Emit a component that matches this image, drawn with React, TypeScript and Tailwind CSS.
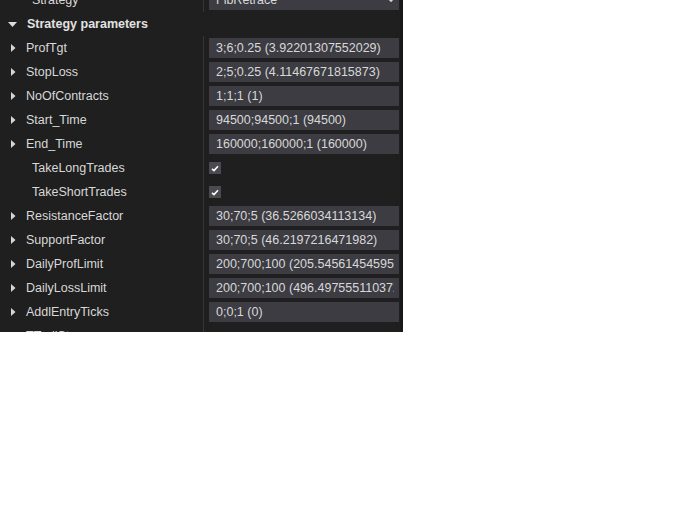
import { ChevronDown } from 'lucide-react';

type Row = { name: string; value?: string; check?: boolean };

const rows: Row[] = [
  { name: 'ProfTgt', value: '3;6;0.25 (3.92201307552029)' },
  { name: 'StopLoss', value: '2;5;0.25 (4.11467671815873)' },
  { name: 'NoOfContracts', value: '1;1;1 (1)' },
  { name: 'Start_Time', value: '94500;94500;1 (94500)' },
  { name: 'End_Time', value: '160000;160000;1 (160000)' },
  { name: 'TakeLongTrades', check: true },
  { name: 'TakeShortTrades', check: true },
  { name: 'ResistanceFactor', value: '30;70;5 (36.5266034113134)' },
  { name: 'SupportFactor', value: '30;70;5 (46.2197216471982)' },
  { name: 'DailyProfLimit', value: '200;700;100 (205.545614545952)' },
  { name: 'DailyLossLimit', value: '200;700;100 (496.497555110372)' },
  { name: 'AddlEntryTicks', value: '0;0;1 (0)' },
];

function Caret() {
  return (
    <svg width="5" height="8" viewBox="0 0 5 8" className="shrink-0">
      <path d="M0 0 L4.5 4 L0 8 Z" fill="#d6d6d6" />
    </svg>
  );
}

function CheckBox() {
  return (
    <div className="w-[12px] h-[12px] bg-[#4a4a50] flex items-center justify-center">
      <svg width="8" height="7" viewBox="0 0 8 7">
        <path d="M1 3.8 L3 5.6 L7 1.2" stroke="#ffffff" strokeWidth="1.6" fill="none" />
      </svg>
    </div>
  );
}

function ParamRow({ row }: { row: Row }) {
  return (
    <div className="flex h-[24px] items-center">
      <div className="w-[203px] shrink-0 h-full flex items-center">
        {row.check ? (
          <span className="pl-[32px]">{row.name}</span>
        ) : (
          <>
            <div className="w-[26px] pl-[11px] flex items-center">
              <Caret />
            </div>
            <span>{row.name}</span>
          </>
        )}
      </div>
      <div className="w-px shrink-0 h-full bg-[#34343a]" />
      <div className="flex-1 min-w-0 h-full flex items-center pl-[5px] pr-[1px]">
        {row.check ? (
          <CheckBox />
        ) : (
          <div className="w-full h-[20px] bg-[#3c3c42] flex items-center pl-[7px] pr-[5px]">
            <span className="overflow-hidden whitespace-nowrap">{row.value}</span>
          </div>
        )}
      </div>
    </div>
  );
}

export default function App() {
  return (
    <div className="w-[698px] h-[509px] bg-white">
      <div
        className="w-[403px] h-[332px] bg-[#1f1f1f] overflow-hidden text-[12.5px] text-[#d8d8d8] border-r-[3px] border-[#191919]"
        style={{ fontFamily: '"Liberation Sans", Arial, sans-serif' }}
      >
        <div className="-mt-[12px]">
          {/* Strategy row */}
          <div className="flex h-[24px] items-center">
            <div className="w-[203px] shrink-0 h-full flex items-center">
              <span className="pl-[32px]">Strategy</span>
            </div>
            <div className="w-px shrink-0 h-full bg-[#34343a]" />
            <div className="flex-1 min-w-0 h-full flex items-center pl-[5px] pr-[1px]">
              <div className="w-full h-[20px] bg-[#3c3c42] flex items-center justify-between pl-[7px] pr-[3px]">
                <span>FibRetrace</span>
                <ChevronDown size={10} strokeWidth={3} color="#d8d8d8" />
              </div>
            </div>
          </div>

          {/* Category header */}
          <div className="flex h-[24px] items-center">
            <div className="w-[27px] pl-[8px] flex items-center">
              <svg width="9" height="5" viewBox="0 0 9 5">
                <path d="M0 0 L9 0 L4.5 5 Z" fill="#dcdcdc" />
              </svg>
            </div>
            <span className="font-bold text-[#e2e2e2]">Strategy parameters</span>
          </div>

          {rows.map((r) => (
            <ParamRow key={r.name} row={r} />
          ))}

          <div className="flex h-[24px] items-center">
            <div className="w-[203px] shrink-0 h-full flex items-center">
              <span className="pl-[26px]">TTrailStop</span>
            </div>
            <div className="w-px shrink-0 h-full bg-[#34343a]" />
          </div>
        </div>
      </div>
    </div>
  );
}
